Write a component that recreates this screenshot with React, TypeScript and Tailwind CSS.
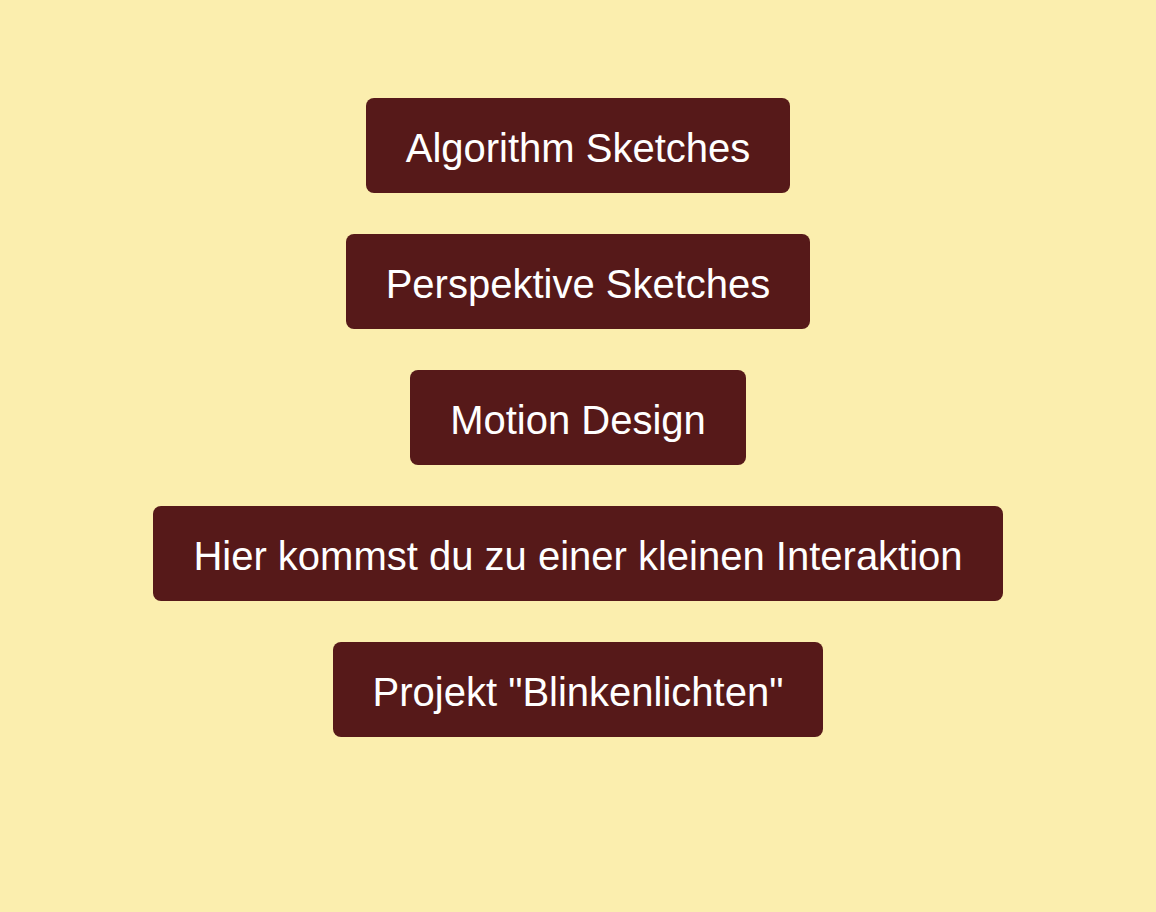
const links = [
  "Algorithm Sketches",
  "Perspektive Sketches",
  "Motion Design",
  "Hier kommst du zu einer kleinen Interaktion",
  'Projekt "Blinkenlichten"',
];

export default function App() {
  return (
    <div
      className="min-h-screen w-full bg-[#fbeeae] flex flex-col items-center gap-[41px] pt-[98px]"
      style={{ fontFamily: '"Liberation Sans", Arial, sans-serif' }}
    >
      {links.map((label) => (
        <a
          key={label}
          href="#"
          className="block rounded-lg bg-[#561919] px-10 pt-[27px] pb-[22px] text-[40px] leading-[46px] text-white"
        >
          {label}
        </a>
      ))}
    </div>
  );
}
